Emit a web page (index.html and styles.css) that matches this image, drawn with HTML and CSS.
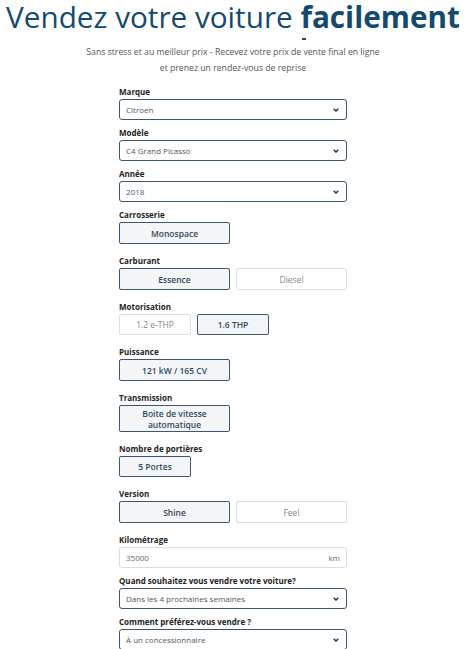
FILE: index.html
```html
<!DOCTYPE html>
<html lang="fr">
<head>
    <meta charset="UTF-8">
    <meta name="viewport" content="width=device-width, initial-scale=1.0">
    <title>Vendez votre voiture facilement</title>
    <link rel="stylesheet" href="styles.css">
</head>
<body>
    <div class="page">
        <h1 class="title">Vendez votre voiture <strong><span class="mark">f</span>acilement</strong></h1>
        <p class="intro">Sans stress et au meilleur prix - Recevez votre prix de vente final en ligne<br>et prenez un rendez-vous de reprise</p>

        <form class="form">
            <div class="field">
                <label>Marque</label>
                <div class="select">Citroen</div>
            </div>
            <div class="field">
                <label>Modèle</label>
                <div class="select">C4 Grand Picasso</div>
            </div>
            <div class="field">
                <label>Année</label>
                <div class="select">2018</div>
            </div>

            <div class="field group">
                <label>Carrosserie</label>
                <div class="options">
                    <button type="button" class="opt active">Monospace</button>
                </div>
            </div>
            <div class="field group">
                <label>Carburant</label>
                <div class="options">
                    <button type="button" class="opt active">Essence</button>
                    <button type="button" class="opt">Diesel</button>
                </div>
            </div>
            <div class="field group">
                <label>Motorisation</label>
                <div class="options small">
                    <button type="button" class="opt">1.2 e-THP</button>
                    <button type="button" class="opt active">1.6 THP</button>
                </div>
            </div>
            <div class="field group">
                <label>Puissance</label>
                <div class="options">
                    <button type="button" class="opt active">121 kW / 165 CV</button>
                </div>
            </div>
            <div class="field group">
                <label>Transmission</label>
                <div class="options">
                    <button type="button" class="opt active tall">Boite de vitesse<br>automatique</button>
                </div>
            </div>
            <div class="field group">
                <label>Nombre de portières</label>
                <div class="options small">
                    <button type="button" class="opt active">5 Portes</button>
                </div>
            </div>
            <div class="field group">
                <label>Version</label>
                <div class="options">
                    <button type="button" class="opt active">Shine</button>
                    <button type="button" class="opt">Feel</button>
                </div>
            </div>

            <div class="field">
                <label>Kilométrage</label>
                <div class="input">
                    <span>35000</span>
                    <span>km</span>
                </div>
            </div>
            <div class="field">
                <label>Quand souhaitez vous vendre votre voiture?</label>
                <div class="select">Dans les 4 prochaines semaines</div>
            </div>
            <div class="field">
                <label>Comment préférez-vous vendre ?</label>
                <div class="select">À un concessionnaire</div>
            </div>
        </form>
    </div>
</body>
</html>
```

FILE: styles.css
```css
body {
    margin: 0;
    font-family: "Open Sans", Arial, sans-serif;
    background: #fff;
    color: #222;
}
.page {
    width: 466px;
}
.title {
    margin: 0;
    padding-top: 1px;
    font-size: 29.7px;
    line-height: 32px;
    font-weight: 400;
    text-align: center;
    white-space: nowrap;
    color: #134a6d;
}
.title strong {
    font-weight: 700;
}
/* small dash under the first letter of the bold word */
.mark {
    position: relative;
}
.mark::after {
    content: "";
    position: absolute;
    left: 2px;
    bottom: -3px;
    width: 4px;
    height: 2px;
    background: #134a6d;
}
.intro {
    margin: 11px 0 0;
    font-size: 8.7px;
    line-height: 16px;
    text-align: center;
    color: #555;
}
.form {
    width: 228px;
    margin: 10px auto 0;
}
.field {
    margin-bottom: 7px;
}
.field.group {
    margin-bottom: 11px;
}
.field label {
    display: block;
    font-size: 8px;
    font-weight: 700;
    line-height: 12px;
    margin-bottom: 1px;
    color: #222;
}
.select,
.input {
    box-sizing: border-box;
    height: 21px;
    display: flex;
    align-items: center;
    padding: 0 6px;
    font-size: 8px;
    color: #555;
    border-radius: 3px;
}
.select {
    border: 1.5px solid #3b5870;
    background: #fff url("data:image/svg+xml,%3Csvg xmlns='http://www.w3.org/2000/svg' width='6' height='4' viewBox='0 0 6 4'%3E%3Cpath d='M0.7 0.7 L3 3 L5.3 0.7' fill='none' stroke='%23333' stroke-width='1.5'/%3E%3C/svg%3E") no-repeat right 7px center;
}
.input {
    border: 1px solid #ddd;
    justify-content: space-between;
    color: #666;
}
.options {
    display: grid;
    grid-template-columns: 111px 111px;
    gap: 6px;
}
.options.small {
    grid-template-columns: 72px 72px;
}
.opt {
    box-sizing: border-box;
    height: 22px;
    padding: 0 4px;
    font-family: inherit;
    font-size: 8.5px;
    line-height: 11px;
    color: #888;
    background: #fff;
    border: 1px solid #e0e0e0;
    border-radius: 2px;
}
.options.small .opt {
    height: 21px;
}
.opt.active {
    font-weight: 600;
    color: #2e4a5f;
    background: #f4f5f6;
    border: 1.5px solid #3b5870;
}
.opt.tall {
    height: 27px;
}
```
